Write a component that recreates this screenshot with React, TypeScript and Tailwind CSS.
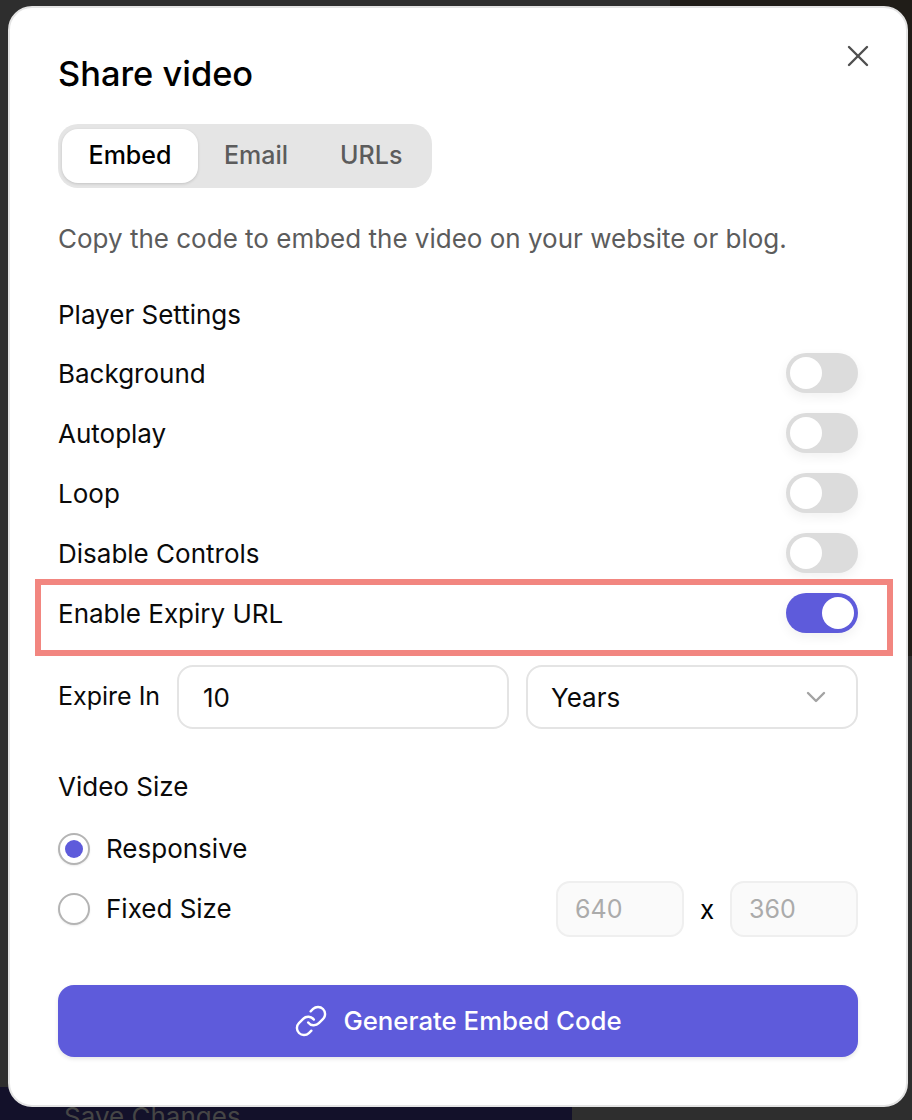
import React from 'react';
import { X, ChevronDown, Link } from 'lucide-react';

const Toggle: React.FC<{ on?: boolean }> = ({ on }) => (
  <div
    className={`flex h-10 w-[72px] items-center rounded-full p-1 shadow-[0_4px_12px_rgba(0,0,0,0.06)] ${
      on ? 'justify-end bg-[#5e5bdb]' : 'justify-start bg-[#dcdcdc]'
    }`}
  >
    <div className="h-8 w-8 rounded-full bg-white" />
  </div>
);

const SettingRow: React.FC<{ label: string; on?: boolean }> = ({ label, on }) => (
  <div className="flex h-[60px] items-center justify-between">
    <span className="text-[26px] text-[#0a0a0a]">{label}</span>
    <Toggle on={on} />
  </div>
);

const Radio: React.FC<{ checked?: boolean }> = ({ checked }) => (
  <div className="flex h-8 w-8 items-center justify-center rounded-full border-2 border-[#b4b4b4] bg-white shadow-[0_1px_2px_rgba(0,0,0,0.08)]">
    {checked && <div className="h-[18px] w-[18px] rounded-full bg-[#5e5bdb]" />}
  </div>
);

const App: React.FC = () => {
  return (
    <div className="relative h-[1120px] w-[912px] overflow-hidden bg-[#2e2e2e] font-['Inter',sans-serif]">
      {/* page behind the modal */}
      <div className="absolute right-0 top-0 h-[656px] w-[242px] bg-[#201d18]" />
      <div className="absolute bottom-0 left-0 h-[33px] w-[572px] bg-[#13112a]">
        <span className="absolute left-[64px] top-[10px] text-[26px] text-[#454545]">Save Changes</span>
      </div>

      <div className="relative ml-2 mt-[6px] h-[1101px] w-[900px] rounded-[24px] border-2 border-[#e4e4e4] bg-white px-[48px]">
        <button className="absolute right-[30px] top-[30px] text-[#4f4f4f]">
          <X className="h-9 w-9" strokeWidth={1.6} />
        </button>

        <h2 className="pt-[42px] text-[34.4px] font-medium leading-[48px] text-black">Share video</h2>

        <div className="mt-[26px] flex h-16 w-[374px] items-center rounded-[20px] bg-[#e5e5e5] pl-1 pb-[1px]">
          <div className="flex h-[54px] w-[136px] items-center justify-center rounded-[16px] bg-white text-[25px] font-medium text-black shadow-[0_1px_3px_rgba(0,0,0,0.15)]">
            Embed
          </div>
          <span className="ml-[26px] text-[25px] font-medium text-[#5c5c5c]">Email</span>
          <span className="ml-[52px] text-[25px] font-medium text-[#5c5c5c]">URLs</span>
        </div>

        <p className="mt-[31px] text-[26px] leading-[40px] text-[#5c5c5c]">
          Copy the code to embed the video on your website or blog.
        </p>

        <p className="mt-[36px] text-[26px] leading-[40px] text-[#0a0a0a]">Player Settings</p>

        <div className="mt-[8px]">
          <SettingRow label="Background" />
          <SettingRow label="Autoplay" />
          <SettingRow label="Loop" />
          <SettingRow label="Disable Controls" />
          <SettingRow label="Enable Expiry URL" on />
        </div>

        <div className="mt-[22px] flex items-center">
          <span className="w-[119px] text-[25px] text-[#0a0a0a]">Expire In</span>
          <div className="flex h-16 w-[332px] items-center rounded-[16px] border-2 border-[#e4e4e4] px-6 text-[26px] text-[#0a0a0a]">
            10
          </div>
          <div className="ml-[17px] flex h-16 w-[332px] items-center justify-between rounded-[16px] border-2 border-[#e4e4e4] pl-[23px] pr-6 text-[26px] text-[#0a0a0a]">
            Years
            <ChevronDown className="h-8 w-8 text-[#a3a3a3]" strokeWidth={1.8} />
          </div>
        </div>

        <p className="mt-[38px] text-[26px] leading-[40px] text-[#0a0a0a]">Video Size</p>

        <div className="mt-[12px] flex h-[60px] items-center gap-4">
          <Radio checked />
          <span className="pb-[2px] text-[26px] text-[#0a0a0a]">Responsive</span>
        </div>

        <div className="flex h-[60px] items-center gap-4">
          <Radio />
          <span className="pb-[2px] text-[26px] text-[#0a0a0a]">Fixed Size</span>
          <div className="ml-auto flex items-center">
            <div className="flex h-14 w-32 items-center rounded-[14px] border-2 border-[#efefef] bg-[#fafafa] px-[17px] pt-[2px] text-[25px] text-[#ababab]">
              640
            </div>
            <span className="w-[46px] text-center text-[26px] text-black">x</span>
            <div className="flex h-14 w-32 items-center rounded-[14px] border-2 border-[#efefef] bg-[#fafafa] px-[17px] pt-[2px] text-[25px] text-[#ababab]">
              360
            </div>
          </div>
        </div>

        <button className="mt-[46px] flex h-[72px] w-[800px] items-center justify-center gap-[15px] rounded-[16px] bg-[#5e5bdb] text-[25.8px] font-[450] text-white shadow-[0_2px_4px_rgba(0,0,0,0.1)]">
          <Link className="h-[34px] w-[34px]" strokeWidth={1.7} />
          Generate Embed Code
        </button>
      </div>

      {/* annotation drawn over the screenshot */}
      <div className="absolute left-[35px] top-[579px] h-[77px] w-[858px] border-[6px] border-[#f28680]" />
    </div>
  );
};

export default App;
